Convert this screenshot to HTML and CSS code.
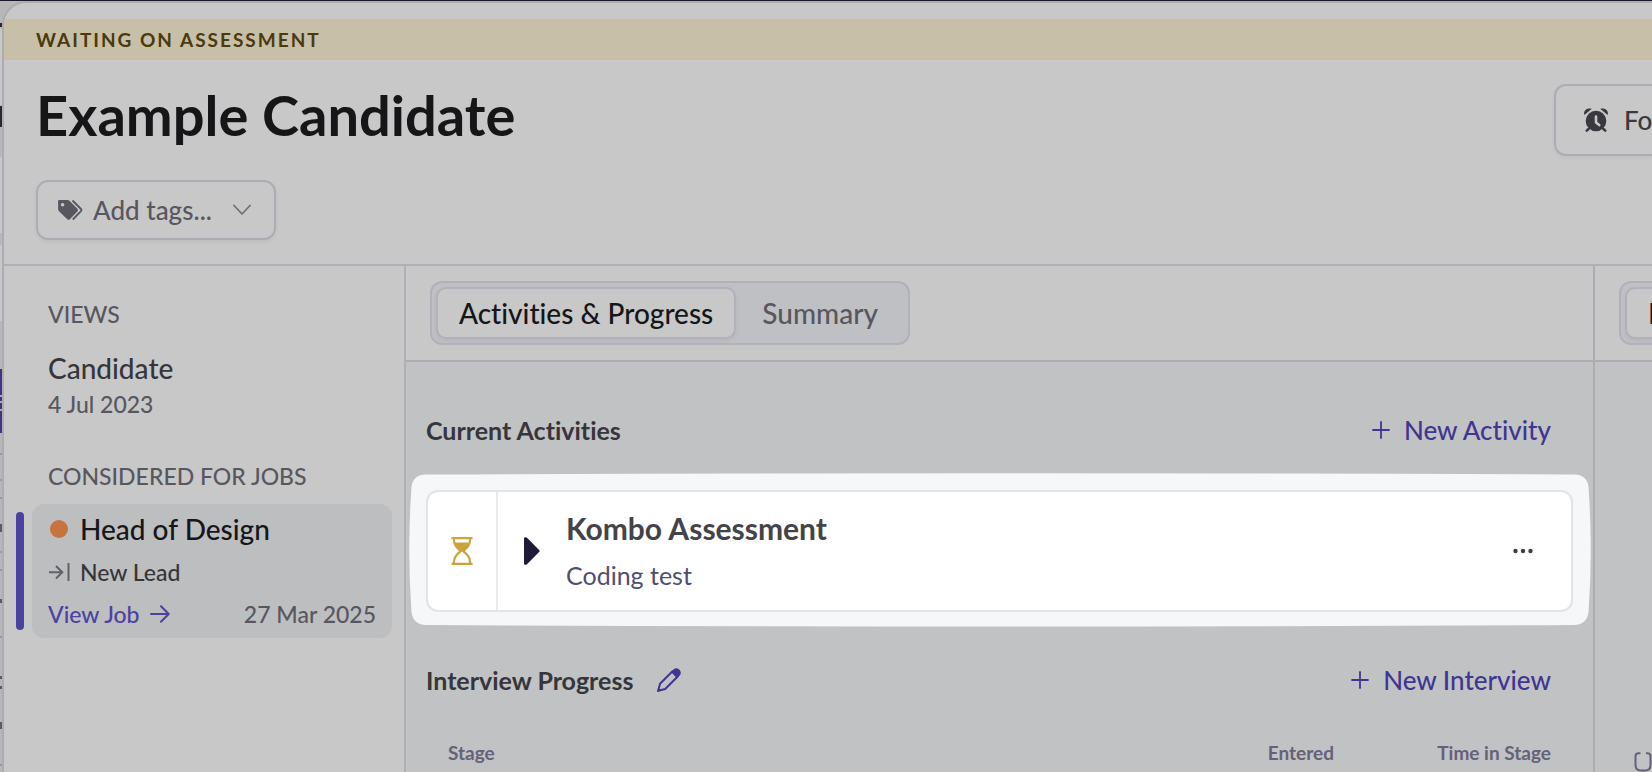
FILE: index.html
```html
<!DOCTYPE html>
<html lang="en">
<head>
    <meta charset="UTF-8">
    <meta name="viewport" content="width=device-width, initial-scale=1.0">
    <title>Example Candidate</title>
    <link rel="stylesheet" href="styles.css">
</head>
<body>
    <!-- Sliver of the page behind the panel -->
    <svg class="backdrop" width="20" height="772" viewBox="0 0 20 772" aria-hidden="true">
        <path fill="#c8c8c8" d="M0 29h2v76H0zM0 157h2v76H0zM0 245h2v76H0z"/>
        <path fill="#3d3580" d="M0 369h2v64H0z"/>
        <path fill="#aaa9bb" d="M0 395h2v2H0zM0 401h2v2H0zM0 409h2v2H0z"/>
        <path fill="#9a9a9d" d="M0 453h2v2H0zM0 479h2v2H0zM0 497h2v2H0zM0 551h2v2H0zM0 569h2v2H0zM0 636h2v2H0zM0 764h2v2H0z"/>
        <path fill="#29292b" d="M0 23h2v4H0zM0 106h2v21H0z"/>
        <path fill="#5c5c62" d="M0 524h2v8H0zM0 599h2v4H0zM0 676h2v3H0zM0 686h2v3H0zM0 722h2v7H0z"/>
    </svg>

    <div class="panel">
        <div class="banner">WAITING ON ASSESSMENT</div>

        <header class="header">
            <div class="title-row">
                <h1 class="title">Example Candidate</h1>
                <button class="follow-btn">
                    <svg width="24" height="24" viewBox="0 0 24 24" aria-hidden="true">
                        <path fill="#3a393f" d="M.4 7C-1 3 2.500-.8 7.800.8zM23.600 7C25 3 21.500-.8 16.200.8z"/>
                        <circle cx="12" cy="13" r="10.300" fill="#3a393f"/>
                        <path d="M4.600 20.800 2.800 22.600M19.400 20.800l1.800 1.800" stroke="#3a393f" stroke-width="2.600" stroke-linecap="round"/>
                        <path d="M12 8.500v6l3.200 2.600" fill="none" stroke="#c8c8c8" stroke-width="2.600" stroke-linecap="round" stroke-linejoin="round"/>
                    </svg>
                    Fo
                </button>
            </div>
            <button class="tags-btn">
                <svg width="26" height="22" viewBox="0 0 26 22" aria-hidden="true">
                    <path fill="#585760" fill-rule="evenodd" d="M2 1h8.500c.8 0 1.300.2 1.900.8l8 8c.8.8.8 1.800 0 2.600l-7.600 7.800c-.8.8-1.700.8-2.500 0L2 12.200c-.6-.6-.9-1.200-.9-2V2c0-.6.400-1 .9-1zm3.600 2.900a1.800 1.800 0 1 0 0 3.600 1.800 1.800 0 0 0 0-3.600z"/>
                    <path d="M15.500 1.500 24 10c.7.7.7 1.400 0 2.100l-8.200 8.400" fill="none" stroke="#585760" stroke-width="1.800"/>
                </svg>
                <span>Add tags...</span>
                <svg class="chevron" width="18" height="12" viewBox="0 0 18 12" aria-hidden="true">
                    <path d="M1 1.500l8 8.500 8-8.500" fill="none" stroke="#707078" stroke-width="1.800" stroke-linecap="round" stroke-linejoin="round"/>
                </svg>
            </button>
        </header>

        <div class="columns">
            <nav class="sidebar">
                <h2 class="side-label">VIEWS</h2>
                <div class="view">
                    <div class="view-name">Candidate</div>
                    <div class="meta">4 Jul 2023</div>
                </div>
                <h2 class="side-label">CONSIDERED FOR JOBS</h2>
                <div class="job">
                    <div class="job-marker"></div>
                    <div class="job-card">
                        <div class="job-name"><span class="dot"></span>Head of Design</div>
                        <div class="job-stage">
                            <svg width="22" height="18" viewBox="0 0 22 18" aria-hidden="true">
                                <path d="M1 9.300h13M8 3l6.300 6.300L8 15.500M20.500 0v18" fill="none" stroke="#626169" stroke-width="2"/>
                            </svg>
                            New Lead
                        </div>
                        <div class="job-foot">
                            <a class="job-link" href="#">View Job
                                <svg width="20" height="18" viewBox="0 0 20 18" aria-hidden="true">
                                    <path d="M1 9h17.500M11 1.200 18.700 9 11 16.800" fill="none" stroke="#4b42a0" stroke-width="2" stroke-linecap="round" stroke-linejoin="round"/>
                                </svg>
                            </a>
                            <span class="meta">27 Mar 2025</span>
                        </div>
                    </div>
                </div>
            </nav>

            <main class="main">
                <div class="tab-bar">
                    <div class="tabs">
                        <button class="tab active">Activities &amp; Progress</button>
                        <button class="tab">Summary</button>
                    </div>
                </div>

                <div class="content">
                    <div class="section-head">
                        <h3 class="section-title">Current Activities</h3>
                        <a class="action" href="#">
                            <svg width="18" height="18" viewBox="0 0 18 18" aria-hidden="true">
                                <path d="M9 1v16M1 9h16" stroke="#3f3690" stroke-width="1.800" stroke-linecap="round"/>
                            </svg>
                            New Activity
                        </a>
                    </div>

                    <div class="spotlight">
                        <svg class="spotlight-bg" viewBox="0 0 1182 154" preserveAspectRatio="none" aria-hidden="true">
                            <path fill="#f5f7f9" d="M17 1.500Q591-1 1165 1.500 1178 1.500 1179.500 14 1184 77 1179.500 139 1178 151.500 1165 152Q591 155 17 152 4 151.500 2.500 139-2 77 2.500 14 4 1.500 17 1.500z"/>
                        </svg>
                        <article class="activity">
                            <div class="activity-status">
                                <svg width="22" height="28" viewBox="0 0 22 28" aria-hidden="true">
                                    <path d="M.5 1.200h21M.5 26.800h21" stroke="#cca43b" stroke-width="2.200"/>
                                    <path d="M2.800 1.500c0 7 3.500 9.500 7 12.500-3.500 3-7 5.500-7 12.500M19.200 1.500c0 7-3.500 9.500-7 12.500 3.500 3 7 5.500 7 12.500" fill="none" stroke="#cca43b" stroke-width="2.200"/>
                                    <path d="M3.500 5.500h15c-1 4.500-4 6-7.500 9.500-3.500-3.500-6.500-5-7.500-9.500z" fill="#cca43b"/>
                                </svg>
                            </div>
                            <button class="expand" aria-label="Expand">
                                <svg width="16" height="28" viewBox="0 0 16 28" aria-hidden="true">
                                    <path fill="#1f1a36" d="M0 1.500C0 0 2 0 3 .8l12.300 12.400c.6.600.6 1 0 1.600L3 27.200c-1 .8-3 .8-3-.7z"/>
                                </svg>
                            </button>
                            <div class="activity-text">
                                <div class="activity-name">Kombo Assessment</div>
                                <div class="activity-type">Coding test</div>
                            </div>
                            <button class="more" aria-label="More">
                                <svg width="20" height="6" viewBox="0 0 20 6" aria-hidden="true">
                                    <g fill="#3f3e44"><circle cx="2.500" cy="3" r="2.200"/><circle cx="10" cy="3" r="2.200"/><circle cx="17.500" cy="3" r="2.200"/></g>
                                </svg>
                            </button>
                        </article>
                    </div>

                    <div class="section-head">
                        <h3 class="section-title">Interview Progress</h3>
                        <button class="edit" aria-label="Edit">
                            <svg width="24" height="24" viewBox="0 0 24 24" aria-hidden="true">
                                <path d="M1.200 22.800 3 15.800 15.500 3.300l5.200 5.200L8.200 21z" fill="none" stroke="#3f3690" stroke-width="2" stroke-linejoin="round"/>
                                <path fill="#3f3690" d="M14 4l2.500-2.500C18.200-.3 20.500-.2 22.200 1.500c1.900 1.900 2.200 4.300.5 6L20 10.200zM0 24l1.200-4.600 3.400 3.400z"/>
                            </svg>
                        </button>
                        <a class="action" href="#">
                            <svg width="18" height="18" viewBox="0 0 18 18" aria-hidden="true">
                                <path d="M9 1v16M1 9h16" stroke="#3f3690" stroke-width="1.800" stroke-linecap="round"/>
                            </svg>
                            New Interview
                        </a>
                    </div>

                    <table class="stages">
                        <thead>
                            <tr>
                                <th class="stage">Stage</th>
                                <th>Entered</th>
                                <th class="time">Time in Stage</th>
                            </tr>
                        </thead>
                    </table>
                </div>
            </main>

            <aside class="aside">
                <div class="tab-bar">
                    <div class="tabs">
                        <button class="tab active">I</button>
                    </div>
                </div>
                <div class="aside-body">
                    <svg width="20" height="20" viewBox="0 0 20 20" aria-hidden="true">
                        <path d="M6.500 1.300H4.500Q1.500 1.300 1.500 4.500V13Q1.500 18.500 7 18.500H11Q16.500 18.500 16.500 13V4.500Q16.500 1.300 13.500 1.300H12" fill="none" stroke="#66617a" stroke-width="2"/>
                    </svg>
                </div>
            </aside>
        </div>
    </div>
</body>
</html>
```
FILE: styles.css
```css
* {
    margin: 0;
    padding: 0;
    box-sizing: border-box;
}

body {
    display: flex;
    height: 100vh;
    padding-left: 2px;
    border-top: 1px solid #1c1530;
    background: #b7b7b9;
    font-family: 'Lato', 'Open Sans', sans-serif;
    font-size: 28px;
    font-weight: 500;
    font-variant-ligatures: none;
    color: #36363a;
    overflow: hidden;
}

button {
    font: inherit;
    font-variant-ligatures: none;
    color: inherit;
    background: none;
    border: none;
    cursor: pointer;
}

a {
    text-decoration: none;
}

svg {
    display: block;
    flex-shrink: 0;
}

.backdrop {
    position: absolute;
    top: 0;
    left: 0;
}

/* Panel */
.panel {
    position: relative;
    flex: 1;
    min-width: 0;
    display: flex;
    flex-direction: column;
    padding-top: 16px;
    background: #c8c8c8;
    border: 2px solid #adacb4;
    border-width: 2px 0 0 2px;
    border-top-left-radius: 24px;
    overflow: hidden;
}

.banner {
    padding: 0 32px;
    background: #c7bfa8;
    color: #4a3a0c;
    font-size: 19px;
    font-weight: 700;
    line-height: 41px;
    letter-spacing: 2px;
}

.header {
    padding: 24px 0 24px 32px;
    border-bottom: 2px solid #b0afb7;
}

.title-row {
    display: flex;
    justify-content: space-between;
    align-items: flex-start;
    margin-bottom: 24px;
}

.title {
    font-size: 56px;
    line-height: 62px;
    color: #161618;
}

.follow-btn {
    display: flex;
    align-items: center;
    gap: 16px;
    width: 98px;
    height: 72px;
    padding-left: 28px;
    border: 2px solid #adacb4;
    border-right: none;
    border-radius: 12px 0 0 12px;
    box-shadow: 0 2px 4px rgba(0, 0, 0, 0.05);
    font-size: 26px;
    color: #3a393f;
    overflow: hidden;
}

.tags-btn {
    display: flex;
    align-items: center;
    gap: 10px;
    height: 60px;
    padding: 0 23px 0 19px;
    border: 2px solid #adacb4;
    border-radius: 12px;
    box-shadow: 0 2px 4px rgba(0, 0, 0, 0.05);
    font-size: 26px;
    color: #585760;
}

.chevron {
    margin-left: 11px;
}

.columns {
    flex: 1;
    display: flex;
    min-height: 0;
}

/* Sidebar */
.sidebar {
    width: 402px;
    flex-shrink: 0;
    padding: 36px 12px 0;
    border-right: 2px solid #b0afb7;
}

.side-label {
    padding-left: 32px;
    font-size: 23px;
    font-weight: 500;
    line-height: 24px;
    color: #585760;
}

.view {
    display: flex;
    flex-direction: column;
    gap: 6px;
    padding: 26px 32px 46px;
}

.view-name {
    line-height: 32px;
}

.meta {
    font-size: 23px;
    line-height: 28px;
    color: #585760;
}

.job {
    display: flex;
    gap: 8px;
    margin-top: 16px;
}

.job-marker {
    width: 8px;
    margin: 8px 0;
    border-radius: 4px;
    background: #4b42a0;
}

.job-card {
    flex: 1;
    display: flex;
    flex-direction: column;
    gap: 13px;
    padding: 10px 16px;
    border-radius: 12px;
    background: #bdbec0;
}

.job-name {
    display: flex;
    align-items: center;
    gap: 12px;
    padding-left: 2px;
    line-height: 30px;
    color: #161618;
}

.dot {
    width: 18px;
    height: 18px;
    border-radius: 50%;
    background: #c6733e;
}

.job-stage {
    display: flex;
    align-items: center;
    gap: 10px;
    font-size: 23px;
    line-height: 30px;
}

.job-foot {
    display: flex;
    justify-content: space-between;
}

.job-link {
    display: flex;
    align-items: center;
    gap: 10px;
    font-size: 23px;
    line-height: 28px;
    color: #4b42a0;
}

/* Main column */
.main {
    flex: 1;
    min-width: 0;
    display: flex;
    flex-direction: column;
}

.tab-bar {
    display: flex;
    padding: 15px 24px;
    border-bottom: 2px solid #adacb4;
}

.tabs {
    display: flex;
    padding: 4px;
    border: 2px solid #b2b1b9;
    border-radius: 12px;
    background: #bfc0c3;
}

.tab {
    height: 52px;
    padding: 0 26px;
    line-height: 44px;
    color: #585760;
}

.tab.active {
    padding: 0 21px;
    border: 2px solid #b2b1b9;
    border-radius: 10px;
    background: #c8c8c8;
    box-shadow: 0 2px 4px rgba(0, 0, 0, 0.05);
    color: #161618;
}

.content {
    flex: 1;
    padding: 48px 20px 0;
    background: #c1c2c4;
}

.section-head {
    display: flex;
    align-items: center;
    height: 40px;
    padding-right: 22px;
}

.section-title {
    font-size: 25px;
}

.edit {
    margin-left: 24px;
}

.action {
    display: flex;
    align-items: center;
    gap: 14px;
    margin-left: auto;
    font-size: 26px;
    color: #3f3690;
}

/* Highlighted activity */
.spotlight {
    position: relative;
    margin: 40px 0 48px;
}

.spotlight-bg {
    position: absolute;
    top: -17px;
    left: -17px;
    width: calc(100% + 35px);
    height: calc(100% + 32px);
}

.activity {
    position: relative;
    display: flex;
    align-items: stretch;
    height: 122px;
    border: 2px solid #e2e3eb;
    border-radius: 12px;
    background: #ffffff;
}

.activity-status {
    display: flex;
    align-items: center;
    justify-content: center;
    width: 70px;
    border-right: 2px solid #e8e8ee;
}

.expand {
    padding: 0 26px;
}

.activity-text {
    flex: 1;
    display: flex;
    flex-direction: column;
    gap: 14px;
    padding-top: 19px;
}

.activity-name {
    font-size: 30px;
    font-weight: 700;
    line-height: 34px;
    color: #44434a;
}

.activity-type {
    font-size: 25px;
    font-weight: 400;
    line-height: 32px;
    color: #524d70;
}

.more {
    padding: 0 38px;
}

.stages {
    width: 100%;
    margin-top: 40px;
    border-collapse: collapse;
    table-layout: fixed;
}

.stages th {
    padding: 0 22px;
    font-size: 19px;
    line-height: 26px;
    text-align: right;
    color: #66617a;
}

.stages .stage {
    text-align: left;
}

.stages .time {
    width: 217px;
}

/* Right column */
.aside {
    width: 59px;
    flex-shrink: 0;
    display: flex;
    flex-direction: column;
    border-left: 2px solid #adacb4;
    overflow: hidden;
}

.aside-body {
    flex: 1;
    display: flex;
    align-items: flex-end;
    padding-left: 39px;
    background: #c1c2c4;
}
```
